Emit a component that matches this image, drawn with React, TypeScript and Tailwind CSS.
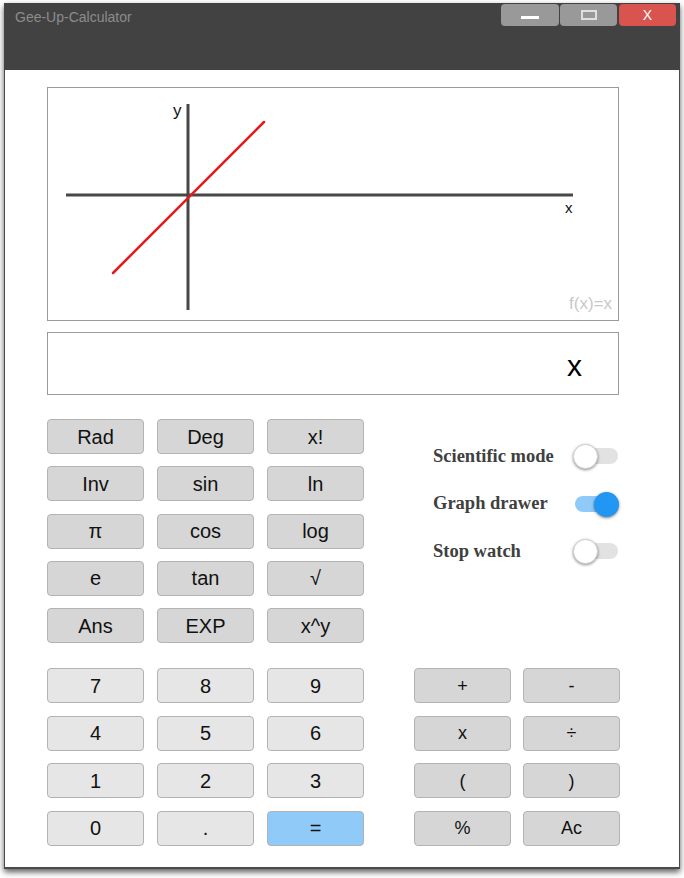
import React from "react";

const sans = { fontFamily: '"Liberation Sans", Arial, sans-serif' };
const serif = { fontFamily: '"Liberation Serif", "Times New Roman", serif' };

function Key({ label, tone }: { label: string; tone: "sci" | "num" | "eq" | "op" }) {
  const cls =
    tone === "num"
      ? "bg-[#e6e6e6] text-[20px]"
      : tone === "eq"
      ? "bg-[#90caf9] text-[20px]"
      : tone === "op"
      ? "bg-[#d6d6d6] text-[18px]"
      : "bg-[#d6d6d6] text-[20px]";
  return (
    <div
      className={`h-[35px] w-[97px] rounded-[4px] border border-[#b3b3b3] ${cls} text-[#111] flex items-center justify-center leading-none`}
    >
      {label}
    </div>
  );
}

function Toggle({ on }: { on: boolean }) {
  return (
    <div className="relative h-[25px] w-[46px]">
      <div
        className={`absolute left-[2px] top-[4px] h-[16px] w-[43px] rounded-full ${
          on ? "bg-[#90caf9]" : "bg-[#e2e2e2]"
        }`}
      />
      {on ? (
        <div className="absolute right-0 top-0 h-[25px] w-[25px] rounded-full bg-[#2196f3] shadow-[0_1px_3px_rgba(0,0,0,0.5)]" />
      ) : (
        <div className="absolute left-0 top-0 h-[25px] w-[25px] rounded-full bg-white border border-[#d0d0d0] shadow-[0_1px_3px_rgba(0,0,0,0.45)]" />
      )}
    </div>
  );
}

export default function App() {
  const sci = ["Rad", "Deg", "x!", "Inv", "sin", "ln", "π", "cos", "log", "e", "tan", "√", "Ans", "EXP", "x^y"];
  const nums = ["7", "8", "9", "4", "5", "6", "1", "2", "3", "0", "."];
  const ops = ["+", "-", "x", "÷", "(", ")", "%", "Ac"];
  return (
    <div className="w-[684px] h-[878px] bg-white pt-[3px] pl-[4px]" style={sans}>
      <div className="w-[676px] shadow-[0_3px_6px_rgba(0,0,0,0.65)]">
        {/* title bar */}
        <div className="h-[67px] bg-[#424242] flex items-start justify-between">
          <div className="pl-[11px] pt-[6px] text-[14px] text-[#8c8c8c] leading-[16px]">Gee-Up-Calculator</div>
          <div className="flex pt-[1px] pr-[4px] gap-[1px]">
            <div className="h-[22px] w-[58px] rounded-[4px] bg-[#999999] flex items-center justify-center">
              <div className="mt-[5px] h-[3px] w-[18px] bg-white" />
            </div>
            <div className="h-[22px] w-[57px] rounded-[4px] bg-[#999999] flex items-center justify-center">
              <div className="h-[10px] w-[16px] border-2 border-[#e0e0e0]" />
            </div>
            <div className="ml-[1px] h-[22px] w-[57px] rounded-[4px] bg-[#d9534f] flex items-center justify-center text-white text-[14px]">
              X
            </div>
          </div>
        </div>
        {/* body */}
        <div className="h-[799px] bg-white border-x border-b-2 border-[#4a4a4a] pl-[42px] pt-[17px]">
          {/* graph */}
          <div className="w-[572px] h-[234px] border border-[#9a9a9a]">
            <svg width="570" height="232" viewBox="0 0 570 232">
              <line x1="18" y1="107" x2="525" y2="107" stroke="#474747" strokeWidth="3" />
              <line x1="140" y1="16" x2="140" y2="222" stroke="#474747" strokeWidth="3" />
              <line x1="65" y1="185" x2="216" y2="34" stroke="#e21b1b" strokeWidth="2.5" strokeLinecap="round" />
              <text x="125" y="28" fontSize="17" fill="#111" style={sans}>y</text>
              <text x="517" y="125" fontSize="15" fill="#111" style={sans}>x</text>
              <text x="564" y="221" fontSize="17" fill="#c8c8c8" textAnchor="end" style={sans}>f(x)=x</text>
            </svg>
          </div>
          {/* display */}
          <div className="mt-[11px] w-[572px] h-[63px] border border-[#9a9a9a] flex items-center justify-end pr-[36px] pt-[4px] text-[30px] text-black">
            x
          </div>
          {/* scientific + toggles */}
          <div className="mt-[24px] flex">
            <div className="grid grid-cols-[97px_97px_97px] gap-x-[13px] gap-y-[12.25px]">
              {sci.map((s) => (
                <Key key={s} label={s} tone="sci" />
              ))}
            </div>
            <div className="ml-[69px] w-[186px] pt-[14px] flex flex-col" style={serif}>
              {[
                ["Scientific mode", false],
                ["Graph drawer", true],
                ["Stop watch", false],
              ].map(([l, on]) => (
                <div key={l as string} className="h-[47.5px] flex items-center justify-between">
                  <span className="text-[18.5px] font-bold text-[#404040]">{l as string}</span>
                  <Toggle on={on as boolean} />
                </div>
              ))}
            </div>
          </div>
          {/* numbers + ops */}
          <div className="mt-[25px] flex">
            <div className="grid grid-cols-[97px_97px_97px] gap-x-[13px] gap-y-[12.5px]">
              {nums.map((s) => (
                <Key key={s} label={s} tone="num" />
              ))}
              <Key label="=" tone="eq" />
            </div>
            <div className="ml-[50px] grid grid-cols-[97px_97px] gap-x-[12px] gap-y-[12.5px]">
              {ops.map((s) => (
                <Key key={s} label={s} tone="op" />
              ))}
            </div>
          </div>
        </div>
      </div>
    </div>
  );
}
